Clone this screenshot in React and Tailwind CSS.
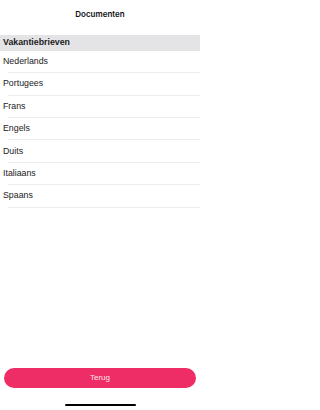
import React from "react";

const items = ["Nederlands", "Portugees", "Frans", "Engels", "Duits", "Italiaans", "Spaans"];

export default function App() {
  return (
    <div
      className="w-[200px] h-[410px] bg-white flex flex-col text-[#1c1c1e]"
      style={{ fontFamily: '"Liberation Sans", Arial, sans-serif' }}
    >
      <div className="h-[35px] flex justify-center pt-[8.5px]">
        <span className="text-[8px] font-semibold leading-[10px] text-[#111]" style={{ fontFamily: 'Inter, "Liberation Sans", sans-serif' }}>Documenten</span>
      </div>
      <div className="h-[15.5px] bg-[#e4e4e6] flex items-center pl-[3px]">
        <span className="text-[8.8px] font-bold leading-none">Vakantiebrieven</span>
      </div>
      <div className="flex flex-col">
        {items.map((it) => (
          <div key={it} className="h-[22.4px] flex flex-col pl-[3px]">
            <div className="flex-1 flex items-center">
              <span className="text-[8.8px] leading-none text-[#222]">{it}</span>
            </div>
            <div className="ml-[5px] h-[0.6px] bg-[#ececee]" />
          </div>
        ))}
      </div>
      <div className="flex-1" />
      <div className="px-[4px]">
        <div className="h-[20px] rounded-full bg-[#ee2c66] flex items-center justify-center">
          <span className="text-[8px] text-[#ffe4ec] leading-none">Terug</span>
        </div>
      </div>
      <div className="h-[22px] flex items-end justify-center pb-[4.5px]">
        <div className="w-[71px] h-[2px] rounded-full bg-black" />
      </div>
    </div>
  );
}
